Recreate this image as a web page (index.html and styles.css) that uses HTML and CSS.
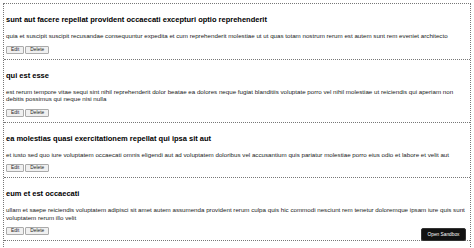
FILE: index.html
```html
<!DOCTYPE html>
<html>
<head>
<meta charset="utf-8">
<link rel="stylesheet" href="styles.css">
</head>
<body>
<div class="list">
  <div class="post">
    <h2 class="title">sunt aut facere repellat provident occaecati excepturi optio reprehenderit</h2>
    <p class="body">quia et suscipit suscipit recusandae consequuntur expedita et cum reprehenderit molestiae ut ut quas totam nostrum rerum est autem sunt rem eveniet architecto</p>
    <div class="actions"><button class="btn">Edit</button><button class="btn">Delete</button></div>
  </div>
  <div class="post">
    <h2 class="title">qui est esse</h2>
    <p class="body">est rerum tempore vitae sequi sint nihil reprehenderit dolor beatae ea dolores neque fugiat blanditiis voluptate porro vel nihil molestiae ut reiciendis qui aperiam non debitis possimus qui neque nisi nulla</p>
    <div class="actions"><button class="btn">Edit</button><button class="btn">Delete</button></div>
  </div>
  <div class="post">
    <h2 class="title">ea molestias quasi exercitationem repellat qui ipsa sit aut</h2>
    <p class="body">et iusto sed quo iure voluptatem occaecati omnis eligendi aut ad voluptatem doloribus vel accusantium quis pariatur molestiae porro eius odio et labore et velit aut</p>
    <div class="actions"><button class="btn">Edit</button><button class="btn">Delete</button></div>
  </div>
  <div class="post">
    <h2 class="title">eum et est occaecati</h2>
    <p class="body">ullam et saepe reiciendis voluptatem adipisci sit amet autem assumenda provident rerum culpa quis hic commodi nesciunt rem tenetur doloremque ipsam iure quis sunt voluptatem rerum illo velit</p>
    <div class="actions"><button class="btn">Edit</button><button class="btn">Delete</button></div>
  </div>
  <div class="post post-empty"></div>
</div>
<button class="sandbox">Open Sandbox</button>
</body>
</html>
```
FILE: styles.css
```css
html, body {
  margin: 0;
  padding: 0;
  background: #fff;
  overflow: hidden;
  height: 248px;
}
body {
  font-family: "Liberation Sans", Arial, sans-serif;
  color: #111;
}
.list {
  margin: 3px 3px 0 3px;
  border: 1px dotted #777;
  border-bottom: none;
}
.post {
  padding: 0 2px;
  border-bottom: 1px dotted #777;
  display: flex;
  flex-direction: column;
}
.post-empty {
  height: 8px;
  border-bottom: none;
}
.title {
  font-size: 7.5px;
  font-weight: bold;
  line-height: 9px;
  margin: 11px 0 0 0;
  color: #000;
}
.body {
  font-size: 6.2px;
  line-height: 7.5px;
  margin: 8px 0 0 0;
  color: #222;
}
.actions {
  display: flex;
  gap: 1px;
  margin: 6px 0 5px 0;
}
.btn {
  font-family: "Liberation Sans", Arial, sans-serif;
  font-size: 4.8px;
  height: 8px;
  padding: 0 4px;
  margin: 0;
  background: #f0f0f0;
  border: 1px solid #aaa;
  border-radius: 1px;
  color: #222;
  line-height: 6px;
}
.sandbox {
  position: fixed;
  right: 8px;
  bottom: 7px;
  width: 45px;
  height: 13px;
  padding: 0;
  background: #111;
  color: #fff;
  border: 1px solid #333;
  border-radius: 2px;
  font-family: "Liberation Sans", Arial, sans-serif;
  font-size: 4.8px;
}
```
